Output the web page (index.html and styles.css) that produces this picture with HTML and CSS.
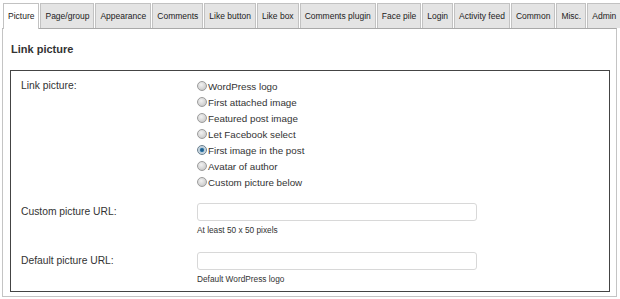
FILE: index.html
```html
<!DOCTYPE html>
<html>
<head>
<meta charset="utf-8">
<link rel="stylesheet" href="styles.css">
</head>
<body>
<div class="wrap">
  <ul class="tabs">
    <li class="tab active">Picture</li>
    <li class="tab">Page/group</li>
    <li class="tab">Appearance</li>
    <li class="tab">Comments</li>
    <li class="tab">Like button</li>
    <li class="tab">Like box</li>
    <li class="tab">Comments plugin</li>
    <li class="tab">Face pile</li>
    <li class="tab">Login</li>
    <li class="tab">Activity feed</li>
    <li class="tab">Common</li>
    <li class="tab">Misc.</li>
    <li class="tab">Admin</li>
  </ul>
  <div class="panel">
    <h3 class="heading">Link picture</h3>
    <div class="box">
      <div class="row">
        <div class="label">Link picture:</div>
        <div class="radios">
          <label class="opt"><input type="radio" name="pic" class="radio">WordPress logo</label>
          <label class="opt"><input type="radio" name="pic" class="radio">First attached image</label>
          <label class="opt"><input type="radio" name="pic" class="radio">Featured post image</label>
          <label class="opt"><input type="radio" name="pic" class="radio">Let Facebook select</label>
          <label class="opt"><input type="radio" name="pic" class="radio" checked>First image in the post</label>
          <label class="opt"><input type="radio" name="pic" class="radio">Avatar of author</label>
          <label class="opt"><input type="radio" name="pic" class="radio">Custom picture below</label>
        </div>
      </div>
      <div class="field first">
        <div class="label">Custom picture URL:</div>
        <input type="text" class="input">
        <div class="hint">At least 50 x 50 pixels</div>
      </div>
      <div class="field">
        <div class="label">Default picture URL:</div>
        <input type="text" class="input">
        <div class="hint">Default WordPress logo</div>
      </div>
    </div>
  </div>
</div>
</body>
</html>
```
FILE: styles.css
```css
* { box-sizing: border-box; }
body {
  margin: 0;
  background: #fff;
  font-family: "Liberation Sans", Arial, sans-serif;
  color: #333;
}
.wrap {
  margin: 3px 0 0 2px;
  width: 615px;
}
.tabs {
  list-style: none;
  margin: 0;
  padding: 0 0 0 1px;
  display: flex;
  height: 25px;
  align-items: flex-end;
}
.tab {
  height: 25px;
  line-height: 24px;
  padding: 0 4px;
  font-size: 8.5px;
  color: #222;
  background: #e4e4e4;
  border: 1px solid #c2c2c2;
  border-bottom: none;
  margin-right: 1px;
  white-space: nowrap;
}
.tab.active {
  background: #fff;
  height: 26px;
  margin-bottom: -1px;
  position: relative;
}
.panel {
  border: 1px solid #c4c4c4;
  border-top-color: #a9a9a9;
  padding: 14px 6px 4px 7px;
}
.heading {
  margin: 0 0 14px 1px;
  font-size: 11px;
  line-height: 13px;
  font-weight: bold;
  color: #333;
}
.box {
  border: 1px solid #444;
  padding: 7px 10px 7px 10px;
  font-size: 10px;
}
.row {
  display: grid;
  grid-template-columns: 176px 1fr;
}
.label {
  line-height: 16px;
  font-size: 10.3px;
  color: #333;
}
.radios {
  display: flex;
  flex-direction: column;
}
.opt {
  display: flex;
  align-items: center;
  height: 16px;
  font-size: 9.8px;
  color: #333;
}
.radio {
  appearance: none;
  -webkit-appearance: none;
  width: 10px;
  height: 10px;
  margin: 0 1px 0 0;
  border-radius: 50%;
  border: 1px solid #9c9c9c;
  background: radial-gradient(circle at 40% 35%, #f2f2f2 0, #d6d6d6 55%, #bdbdbd 100%);
}
.radio:checked {
  border-color: #6a7f8e;
  background: radial-gradient(circle at 50% 50%, #1a4f7a 0, #2f77a8 30%, #b9ccd9 45%, #e6ecf0 100%);
}
.field {
  display: grid;
  grid-template-columns: 176px 280px;
  align-items: center;
  margin-top: 17px;
}
.field.first {
  margin-top: 13px;
}
.input {
  width: 280px;
  height: 18px;
  margin: 0;
  border: 1px solid #d8d8d8;
  border-radius: 3px;
  background: #fff;
}
.hint {
  grid-column: 2;
  font-size: 8.3px;
  line-height: 10px;
  margin-top: 4px;
  color: #333;
}
```
